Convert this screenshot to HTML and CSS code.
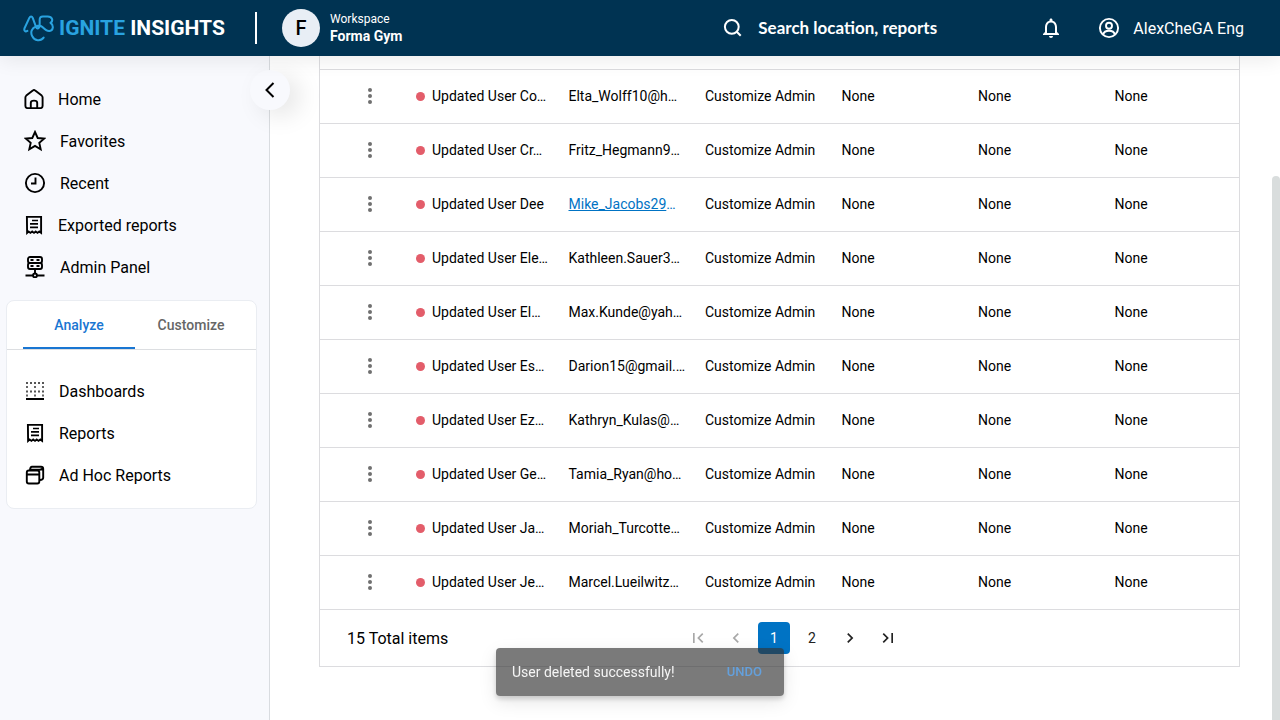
FILE: index.html
```html
<!DOCTYPE html>
<html lang="en">
<head>
<meta charset="utf-8">
<title>Ignite Insights</title>
<link rel="stylesheet" href="styles.css">
</head>
<body>
<svg class="sprite" aria-hidden="true">
  <symbol id="receipt" viewBox="1 1 20 20"><path d="M3.900 2.900h14.200v16l-1.800-1.400-1.800 1.400-1.800-1.400-1.700 1.400-1.800-1.400-1.800 1.400-1.800-1.400-1.500 1.400z" fill="none" stroke="currentColor" stroke-width="1.900"/><path d="M9 6.500h6M7 9.900h8M7 13.300h8" stroke="currentColor" stroke-width="1.700"/></symbol>
  <symbol id="kebab" viewBox="0 0 24 24"><circle cx="12" cy="6" r="2"/><circle cx="12" cy="12" r="2"/><circle cx="12" cy="18" r="2"/></symbol>
</svg>
<header class="topbar">
  <a class="brand" href="#">
    <svg class="brand-mark" viewBox="0 0 32 28" aria-hidden="true"><path d="M4.500 16.500C2 18 .8 16 1.500 13.700L6.500 3C7.400 1 9.200 1 10 3L13.500 12.500C14.500 14.800 17.200 14 17.200 11V5C17.200 2.400 18.300 1.500 20.500 1.500H25.500C30.500 1.500 31.500 6 28.500 8.200C32 10.500 31.500 16 27.500 16.500C24.500 17 22 14.500 20 12.500C18 10.500 15.500 10.800 13.500 12C9 13.500 7.300 18 9.500 22C11.500 27 18.500 27.500 21.300 23.500" fill="none" stroke="currentColor" stroke-width="2.100" stroke-linecap="round" stroke-linejoin="round"/></svg>
    <span class="brand-name"><span class="brand-first">IGNITE</span> INSIGHTS</span>
  </a>
  <div class="workspace">
    <span class="avatar">F</span>
    <div class="workspace-text"><span class="workspace-label">Workspace</span><strong class="workspace-name">Forma Gym</strong></div>
  </div>
  <label class="search">
    <svg width="20" height="20" viewBox="0 0 20 20" aria-hidden="true"><circle cx="8.800" cy="8.800" r="6.900" fill="none" stroke="currentColor" stroke-width="2"/><path d="M13.700 13.700l4 4" stroke="currentColor" stroke-width="2"/></svg>
    <input class="search-input" type="text" placeholder="Search location, reports" aria-label="Search location, reports">
  </label>
  <button class="icon-button" aria-label="Notifications"><svg width="24" height="24" viewBox="0 0 24 24"><path d="M12 22c1.100 0 2-.9 2-2h-4c0 1.100.9 2 2 2zm6-6v-5c0-3.070-1.630-5.640-4.500-6.320V4c0-.83-.67-1.500-1.500-1.500s-1.500.67-1.500 1.500v.68C7.640 5.360 6 7.920 6 11v5l-2 2v1h16v-1l-2-2zm-2 1H8v-6c0-2.480 1.510-4.500 4-4.500s4 2.020 4 4.500v6z" fill="currentColor"/></svg></button>
  <button class="account"><svg width="22" height="22" viewBox="0 0 22 22" fill="none" stroke="currentColor" stroke-width="1.900" aria-hidden="true"><circle cx="11" cy="11" r="9.100"/><circle cx="11" cy="8.800" r="3"/><path d="M5.200 17.500c.6-2.500 3-3.700 5.800-3.700s5.200 1.200 5.800 3.700"/></svg><span>AlexCheGA Eng</span></button>
</header>
<div class="body">
  <aside class="sidebar">
    <button class="collapse" aria-label="Collapse sidebar"><svg width="20" height="20" viewBox="0 0 20 20"><path d="M13.500 3l-7 7 7 7" fill="none" stroke="currentColor" stroke-width="2"/></svg></button>
    <nav class="nav">
      <a class="nav-link" href="#"><svg class="nav-icon" viewBox="1 1 20 20" fill="none" stroke="currentColor" stroke-width="1.900"><path d="M2.400 9.600v8.500q0 2 2 2h13.200q2 0 2-2V9.600q0-1.200-.9-2L12.200 2.500q-1.200-1-2.400 0L3.300 7.600q-.9.800-.9 2zM7.800 20v-5.200q0-2.200 3.200-2.200t3.200 2.200V20" stroke-linejoin="round"/></svg>Home</a>
      <a class="nav-link" href="#"><svg class="nav-icon nav-icon--large" viewBox="0 0 22 22"><path d="M11 2l2.700 6 6.400.6-4.800 4.300 1.400 6.400-5.700-3.400-5.700 3.400 1.400-6.400-4.800-4.300 6.400-.6z" fill="none" stroke="currentColor" stroke-width="1.900"/></svg>Favorites</a>
      <a class="nav-link" href="#"><svg class="nav-icon nav-icon--large" viewBox="0 0 22 22" fill="none" stroke="currentColor" stroke-width="1.900"><circle cx="11" cy="11" r="9.100"/><path d="M11.500 5.500v6H7"/></svg>Recent</a>
      <a class="nav-link" href="#"><svg class="nav-icon"><use href="#receipt"/></svg>Exported reports</a>
      <a class="nav-link" href="#"><svg class="nav-icon nav-icon--large" viewBox="0 0 22 22" fill="none" stroke="currentColor" stroke-width="1.900"><rect x="4" y="1" width="14" height="6" rx="2"/><rect x="4" y="7" width="14" height="6" rx="2"/><path d="M6.500 4h3M12.500 4h3M6.500 10h3M12.500 10h3M11 13v4M1.500 19.500H9M13 19.500h7.500"/><circle cx="11" cy="19.400" r="1.900"/></svg>Admin Panel</a>
    </nav>
    <section class="panel">
      <div class="tabs" role="tablist">
        <button class="tab tab--active" role="tab" aria-selected="true">Analyze</button>
        <button class="tab" role="tab" aria-selected="false">Customize</button>
      </div>
      <nav class="panel-nav">
        <a class="nav-link" href="#"><svg class="nav-icon" viewBox="0 0 20 20" stroke="currentColor" fill="none"><path d="M1 2h18M1 10.500h18" stroke="#555" stroke-width="2" stroke-dasharray="2 2"/><path d="M1 6h18M1 14.500h18" stroke="#666" stroke-width="2" stroke-dasharray="2 6"/><path d="M1 18h18" stroke-width="2"/></svg>Dashboards</a>
        <a class="nav-link" href="#"><svg class="nav-icon"><use href="#receipt"/></svg>Reports</a>
        <a class="nav-link" href="#"><svg class="nav-icon" viewBox="2 1 20 20" fill="none" stroke="currentColor" stroke-width="1.900"><rect x="3.800" y="6.500" width="12.500" height="13" rx="2"/><path d="M4 10.500h12M7 6q.3-3.300 2-3.300h9q2.200 0 2.200 2v9q0 2-3.500 2.300M7 5.700h9.500q3 0 3.500-2.500"/></svg>Ad Hoc Reports</a>
      </nav>
    </section>
  </aside>
  <main class="content">
    <div class="grid-card">
      <table class="users">
        <colgroup><col class="col-menu"><col span="6"></colgroup>
        <tbody>
          <tr><td class="cell-menu"><button class="kebab" aria-label="Row actions"><svg width="24" height="24"><use href="#kebab"/></svg></button></td><td class="cell-name">Updated User Co…</td><td>Elta_Wolff10@h…</td><td>Customize Admin</td><td>None</td><td>None</td><td>None</td></tr>
          <tr><td class="cell-menu"><button class="kebab" aria-label="Row actions"><svg width="24" height="24"><use href="#kebab"/></svg></button></td><td class="cell-name">Updated User Cr…</td><td>Fritz_Hegmann9…</td><td>Customize Admin</td><td>None</td><td>None</td><td>None</td></tr>
          <tr><td class="cell-menu"><button class="kebab" aria-label="Row actions"><svg width="24" height="24"><use href="#kebab"/></svg></button></td><td class="cell-name">Updated User Dee</td><td class="cell-link"><a href="#">Mike_Jacobs29</a>…</td><td>Customize Admin</td><td>None</td><td>None</td><td>None</td></tr>
          <tr><td class="cell-menu"><button class="kebab" aria-label="Row actions"><svg width="24" height="24"><use href="#kebab"/></svg></button></td><td class="cell-name">Updated User Ele…</td><td>Kathleen.Sauer3…</td><td>Customize Admin</td><td>None</td><td>None</td><td>None</td></tr>
          <tr><td class="cell-menu"><button class="kebab" aria-label="Row actions"><svg width="24" height="24"><use href="#kebab"/></svg></button></td><td class="cell-name">Updated User El…</td><td>Max.Kunde@yah…</td><td>Customize Admin</td><td>None</td><td>None</td><td>None</td></tr>
          <tr><td class="cell-menu"><button class="kebab" aria-label="Row actions"><svg width="24" height="24"><use href="#kebab"/></svg></button></td><td class="cell-name">Updated User Es…</td><td>Darion15@gmail.…</td><td>Customize Admin</td><td>None</td><td>None</td><td>None</td></tr>
          <tr><td class="cell-menu"><button class="kebab" aria-label="Row actions"><svg width="24" height="24"><use href="#kebab"/></svg></button></td><td class="cell-name">Updated User Ez…</td><td>Kathryn_Kulas@…</td><td>Customize Admin</td><td>None</td><td>None</td><td>None</td></tr>
          <tr><td class="cell-menu"><button class="kebab" aria-label="Row actions"><svg width="24" height="24"><use href="#kebab"/></svg></button></td><td class="cell-name">Updated User Ge…</td><td>Tamia_Ryan@ho…</td><td>Customize Admin</td><td>None</td><td>None</td><td>None</td></tr>
          <tr><td class="cell-menu"><button class="kebab" aria-label="Row actions"><svg width="24" height="24"><use href="#kebab"/></svg></button></td><td class="cell-name">Updated User Ja…</td><td>Moriah_Turcotte…</td><td>Customize Admin</td><td>None</td><td>None</td><td>None</td></tr>
          <tr><td class="cell-menu"><button class="kebab" aria-label="Row actions"><svg width="24" height="24"><use href="#kebab"/></svg></button></td><td class="cell-name">Updated User Je…</td><td>Marcel.Lueilwitz…</td><td>Customize Admin</td><td>None</td><td>None</td><td>None</td></tr>
        </tbody>
      </table>
      <footer class="grid-footer">
        <span class="total">15 Total items</span>
        <nav class="pager" aria-label="Pages">
          <button class="page" disabled aria-label="First page"><svg width="20" height="20" viewBox="0 0 24 24"><path d="M18.410 16.590L13.820 12l4.590-4.590L17 6l-6 6 6 6zM6 6h2v12H6z"/></svg></button>
          <button class="page" disabled aria-label="Previous page"><svg width="20" height="20" viewBox="0 0 24 24"><path d="M15.410 7.410L14 6l-6 6 6 6 1.410-1.410L10.830 12z"/></svg></button>
          <button class="page page--current" aria-current="page">1</button>
          <button class="page">2</button>
          <button class="page" aria-label="Next page"><svg width="20" height="20" viewBox="0 0 24 24"><path d="M10 6L8.590 7.410 13.170 12l-4.580 4.590L10 18l6-6z"/></svg></button>
          <button class="page" aria-label="Last page"><svg width="20" height="20" viewBox="0 0 24 24"><path d="M5.590 7.410L10.180 12l-4.590 4.590L7 18l6-6-6-6zM16 6h2v12h-2z"/></svg></button>
        </nav>
      </footer>
    </div>
  </main>
  <div class="scroll-track"><div class="scroll-thumb"></div></div>
</div>
<div class="snackbar" role="status"><span>User deleted successfully!</span><button class="undo">UNDO</button></div>
</body>
</html>
```
FILE: styles.css
```css
* { box-sizing: border-box; }
body {
  margin: 0;
  height: 100vh;
  display: flex;
  flex-direction: column;
  overflow: hidden;
  font: 14px/20px Roboto, "Liberation Sans", sans-serif;
  color: #000;
  background: #fff;
}
button { border: 0; padding: 0; background: none; font: inherit; color: inherit; cursor: pointer; }
a { color: inherit; text-decoration: none; }
svg { display: block; flex: none; }
.sprite { position: absolute; width: 0; height: 0; }

.topbar {
  position: relative;
  z-index: 2;
  display: flex;
  align-items: center;
  flex: none;
  height: 56px;
  padding: 0 36px 0 23px;
  color: #fff;
  background: #003352;
  box-shadow: 0 4px 20px rgba(0, 0, 0, 0.08);
}
.brand {
  display: flex;
  align-items: center;
  gap: 5px;
  width: 234px;
  height: 32px;
  border-right: 2px solid #fff;
}
.brand-mark { width: 31px; height: 27px; color: #29a3e0; }
.brand-name { font-size: 21px; font-weight: 700; line-height: 24px; white-space: nowrap; }
.brand-first { color: #29a3e0; }
.workspace { display: flex; align-items: center; gap: 10px; margin-left: 25px; }
.avatar {
  display: grid;
  place-items: center;
  width: 38px;
  height: 38px;
  border-radius: 50%;
  font-size: 20px;
  font-weight: 500;
  color: #000;
  background: #e8eef5;
}
.workspace-text { display: flex; flex-direction: column; line-height: 17px; }
.workspace-label { font-size: 12px; }
.workspace-name { font-size: 14px; }
.search { display: flex; align-items: center; gap: 15px; width: 260px; margin-left: auto; }
.search-input {
  flex: 1;
  min-width: 0;
  padding: 0;
  border: 0;
  outline: 0;
  background: none;
  color: #fff;
  font: bold 17px/24px Lato, "Open Sans", sans-serif;
}
.search-input::placeholder { color: #fff; opacity: 1; }
.icon-button { margin-left: 56px; }
.account { display: flex; align-items: center; gap: 13px; margin-left: 35px; font-size: 16px; }
.account span { padding-top: 2px; }

.body { flex: 1; min-height: 0; display: flex; }
.sidebar {
  position: relative;
  flex: none;
  width: 270px;
  padding: 23px 12px 0 6px;
  border-right: 1px solid #d9dce0;
  background: #f8f9fd;
}
.collapse {
  position: absolute;
  top: 14px;
  right: -21px;
  display: grid;
  place-items: center;
  width: 40px;
  height: 40px;
  border-radius: 50%;
  background: #f8f9fd;
  box-shadow: 10px 6px 24px rgba(0, 0, 0, 0.1);
}
.nav { padding-left: 18px; }
.nav-link { display: flex; align-items: center; gap: 14px; height: 42px; font-size: 16px; }
.nav-icon { width: 20px; height: 20px; margin-bottom: 2px; }
.nav-icon--large { width: 22px; height: 22px; }
.panel { margin-top: 11px; border: 1px solid #eaedf2; border-radius: 8px; background: #fff; }
.tabs { display: flex; padding-left: 16px; border-bottom: 1px solid #dcdee1; }
.tab { width: 112px; height: 48px; padding-top: 2px; border-bottom: 2px solid transparent; font-weight: 500; color: #666; }
.tab--active { color: #1976d2; border-color: #1976d2; }
.panel-nav { padding: 21px 18px 11px; }

.content { flex: 1; min-width: 0; padding: 0 32px 0 49px; }
.grid-card { padding-top: 13px; border: 1px solid #dcdcdf; border-top: 0; }
.users { width: 100%; border-collapse: collapse; table-layout: fixed; border-top: 1px solid #dcdcdf; }
.col-menu { width: 100px; }
.users td { height: 54px; padding: 0 0 2px 12px; border-bottom: 1px solid #dcdcdf; white-space: nowrap; }
.users .cell-menu { padding: 0 0 2px; }
.kebab { display: block; margin: auto; color: #707070; fill: currentColor; }
.cell-name { position: relative; }
.cell-name::before {
  content: "";
  position: absolute;
  top: 22px;
  left: -4px;
  width: 9px;
  height: 9px;
  border-radius: 50%;
  background: #e35d6a;
}
.cell-link { color: #0073c4; }
.cell-link a { text-decoration: underline; }
.grid-footer { display: grid; grid-template-columns: 1fr auto 1fr; align-items: center; height: 56px; padding-left: 27px; }
.total { padding-top: 2px; font-size: 16px; }
.pager { display: flex; gap: 6px; }
.page { display: grid; place-items: center; width: 32px; height: 32px; border-radius: 4px; color: #222; fill: currentColor; }
.page:disabled { color: #a8a8a8; }
.page--current { color: #fff; background: #0073c4; }

.scroll-track { flex: none; width: 8px; padding-top: 120px; }
.scroll-thumb { height: 100%; border-radius: 4px 4px 0 0; background: #d9dddd; }

.snackbar {
  position: fixed;
  z-index: 3;
  bottom: 24px;
  left: 50%;
  transform: translateX(-50%);
  display: flex;
  align-items: center;
  justify-content: space-between;
  width: 288px;
  height: 48px;
  padding: 0 22px 0 16px;
  border-radius: 4px;
  color: #f5f5f5;
  background: rgba(50, 50, 50, 0.65);
  box-shadow: 0 3px 5px rgba(0, 0, 0, 0.16), 0 6px 18px rgba(0, 0, 0, 0.1);
}
.undo { font-size: 13px; font-weight: 500; color: #64a0dc; }
```
